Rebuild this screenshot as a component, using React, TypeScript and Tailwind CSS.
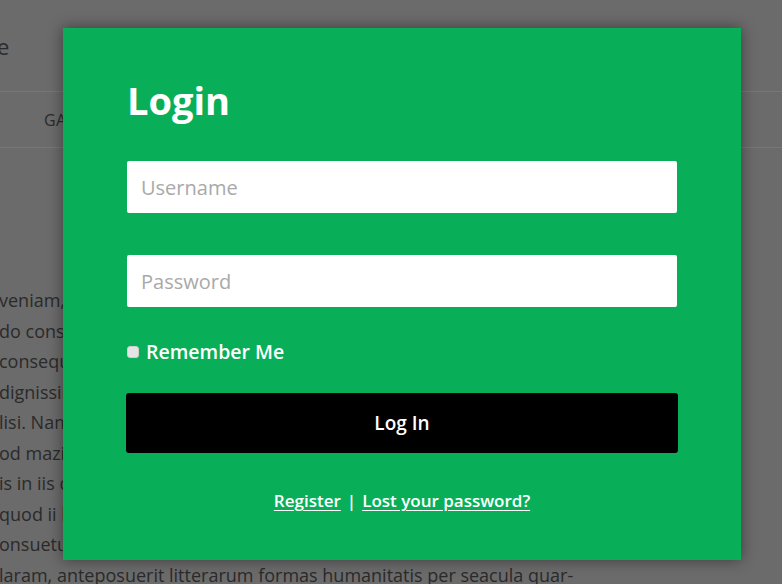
import React from 'react';

const bodyLines = [
  'veniam, quis nostrud exerci tation ullamcorper suscipit lobortis nisl ut',
  'do consequat. Duis autem vel eum iriure dolor in hendrerit in vulputate',
  'consequat, vel illum dolore eu feugiat nulla facilisis at vero eros et',
  'dignissim qui blandit praesent luptatum zzril delenit augue duis dolore',
  'lisi. Nam liber tempor cum soluta nobis eleifend option congue nihil',
  'od mazim placerat facer possim assum. Typi non habent claritatem insitam;',
  'is in iis qui facit eorum claritatem. Investigationes demonstraverunt',
  'quod ii legunt saepius. Claritas est etiam processus dynamicus, qui',
  'onsuetudium lectorum. Mirum est notare quam littera gothica, quam nunc',
  'laram, anteposuerit litterarum formas humanitatis per seacula quar-',
];

function LoginModal() {
  return (
    <div className="absolute left-[63px] top-[28px] w-[678px] h-[532px] bg-[#09af58] shadow-[0_0_14px_rgba(0,0,0,0.45)] px-[64px] pt-[49px]">
      <h1 className="text-[38px] leading-[46px] font-bold text-white">Login</h1>

      <input
        type="text"
        placeholder="Username"
        className="mt-[38px] block w-[550px] h-[52px] rounded-[2px] bg-white px-[14px] text-[20px] text-gray-700 placeholder:text-[#a9a9a9] outline-none"
      />
      <input
        type="password"
        placeholder="Password"
        className="mt-[42px] block w-[550px] h-[52px] rounded-[2px] bg-white px-[14px] text-[20px] text-gray-700 placeholder:text-[#a9a9a9] outline-none"
      />

      <label className="mt-[33px] flex items-center h-[24px] gap-[7px] text-white text-[19.5px] font-semibold">
        <span className="w-[12px] h-[12px] rounded-[3px] bg-[#e4e4e4] border border-[#cfcfcf]" />
        Remember Me
      </label>

      <button className="mt-[29px] -ml-[1px] block w-[552px] h-[60px] rounded-[3px] bg-black text-white text-[19px] font-semibold">
        Log In
      </button>

      <div className="mt-[36px] text-center text-white text-[17px] leading-[24px] font-semibold">
        <a className="underline underline-offset-[3px]">Register</a>
        <span className="mx-[6px]">|</span>
        <a className="underline underline-offset-[3px]">Lost your password?</a>
      </div>
    </div>
  );
}

export default function App() {
  return (
    <div className="relative w-[782px] h-[584px] overflow-hidden bg-[#6b6b6b] font-['Open_Sans',sans-serif] text-[#2a2a2a]">
      <div className="h-[92px] border-b border-[#777777] flex items-center">
        <span className="-ml-[3px] text-[22px] leading-none">e</span>
      </div>
      <div className="h-[56px] border-b border-[#777777] flex items-center pl-[44px]">
        <span className="text-[16px] uppercase tracking-wide">Gallery</span>
      </div>

      <div className="pt-[137px] -ml-[1px] text-[18px] leading-[30.5px] whitespace-nowrap">
        {bodyLines.map((line, i) => (
          <div key={i}>{line}</div>
        ))}
      </div>

      <LoginModal />
    </div>
  );
}
